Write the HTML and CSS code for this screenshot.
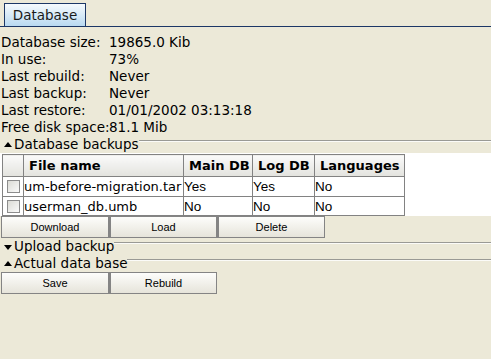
FILE: index.html
```html
<!DOCTYPE html>
<html>
<head>
<meta charset="utf-8">
<link rel="stylesheet" href="styles.css">
</head>
<body>
<div class="tabbar"><div class="tab">Database</div></div>
<div class="info">
  <div>Database size:</div><div>19865.0 Kib</div>
  <div>In use:</div><div>73%</div>
  <div>Last rebuild:</div><div>Never</div>
  <div>Last backup:</div><div>Never</div>
  <div>Last restore:</div><div>01/01/2002 03:13:18</div>
  <div>Free disk space:</div><div>81.1 Mib</div>
</div>
<div class="section"><span class="tri up"></span><span class="stitle">Database backups</span><span class="sline"></span></div>
<div class="tablewrap">
<table class="grid">
  <tr><th class="cb"></th><th class="fn">File name</th><th class="mdb">Main DB</th><th class="ldb">Log DB</th><th class="lang">Languages</th></tr>
  <tr><td class="cb"><span class="box"></span></td><td class="name">um-before-migration.tar</td><td>Yes</td><td>Yes</td><td>No</td></tr>
  <tr class="last"><td class="cb"><span class="box"></span></td><td class="name">userman_db.umb</td><td>No</td><td>No</td><td>No</td></tr>
</table>
</div>
<div class="buttons"><button class="btn">Download</button><button class="btn">Load</button><button class="btn">Delete</button></div>
<div class="section"><span class="tri down"></span><span class="stitle">Upload backup</span><span class="sline"></span></div>
<div class="section"><span class="tri up"></span><span class="stitle">Actual data base</span><span class="sline"></span></div>
<div class="buttons"><button class="btn">Save</button><button class="btn">Rebuild</button></div>
</body>
</html>
```
FILE: styles.css
```css
html, body { margin: 0; padding: 0; }
body {
  background: #ECE9D8;
  font-family: "DejaVu Sans", Verdana, sans-serif;
  font-size: 13.5px;
  color: #000;
  width: 491px;
  height: 359px;
  overflow: hidden;
}
.tabbar {
  height: 26px;
  border-bottom: 1px solid #1c3766;
  display: flex;
  align-items: flex-end;
  padding-left: 4px;
}
.tab {
  width: 80px;
  height: 22px;
  border: 1px solid #1c3766;
  border-bottom: none;
  background: linear-gradient(#f6fafd, #b9d9f1);
  text-align: center;
  line-height: 22px;
  color: #1a1a1a;
  font-size: 13.5px;
}
.info {
  display: grid;
  grid-template-columns: 108px auto;
  line-height: 17px;
  padding: 7px 0 0 1px;
  white-space: nowrap;
}
.section {
  display: flex;
  align-items: flex-start;
  height: 17px;
  line-height: 17px;
}
.tri {
  width: 0; height: 0;
  margin: 6px 2px 0 4px;
  border-left: 4px solid transparent;
  border-right: 4px solid transparent;
}
.tri.up { border-bottom: 5px solid #000; }
.tri.down { border-top: 5px solid #000; margin-top: 7px; }
.stitle { white-space: nowrap; }
.sline {
  flex: 1;
  margin-top: 4px;
  border-top: 1px solid #9a9a95;
  border-bottom: 1px solid #fbfbf8;
}
.tablewrap {
  background: #fff;
  padding: 1px 0 0 2px;
  height: 62px;
}
.grid {
  border-collapse: collapse;
  background: #fff;
}
.grid th, .grid td {
  border: 1px solid #828282;
  padding: 0;
  text-align: left;
  white-space: nowrap;
}
.grid th {
  height: 21px;
  font-weight: bold;
  font-size: 13px;
  background: linear-gradient(#fafafa, #e3e3de);
  padding-left: 5px;
}
.grid th.cb { padding: 0; }
.grid td {
  height: 19px;
  font-family: "Liberation Sans", Arial, sans-serif;
  font-size: 13.5px;
}
.grid tr.last td { height: 18px; }
.grid td.name { font-family: "DejaVu Sans", Verdana, sans-serif; font-size: 13px; }
.cb { width: 20px; }
.fn { width: 154px; }
.mdb { width: 63px; }
.ldb { width: 56px; }
.lang { width: 84px; }
.box {
  display: block;
  width: 11px; height: 11px;
  margin-left: 4px;
  border: 1px solid #8c8c8c;
  background: linear-gradient(135deg, #dcdcd6, #fafafa);
}
.buttons {
  display: flex;
  padding-left: 1px;
  height: 22px;
}
.btn {
  width: 108px;
  height: 22px;
  margin: 0;
  padding: 0;
  border: 1px solid #848484;
  background: linear-gradient(#fdfdfb, #e6e4da);
  font-family: "Liberation Sans", Arial, sans-serif;
  font-size: 11px;
  color: #000;
}
.btn + .btn { border-left: 2px solid #848484; }
```
